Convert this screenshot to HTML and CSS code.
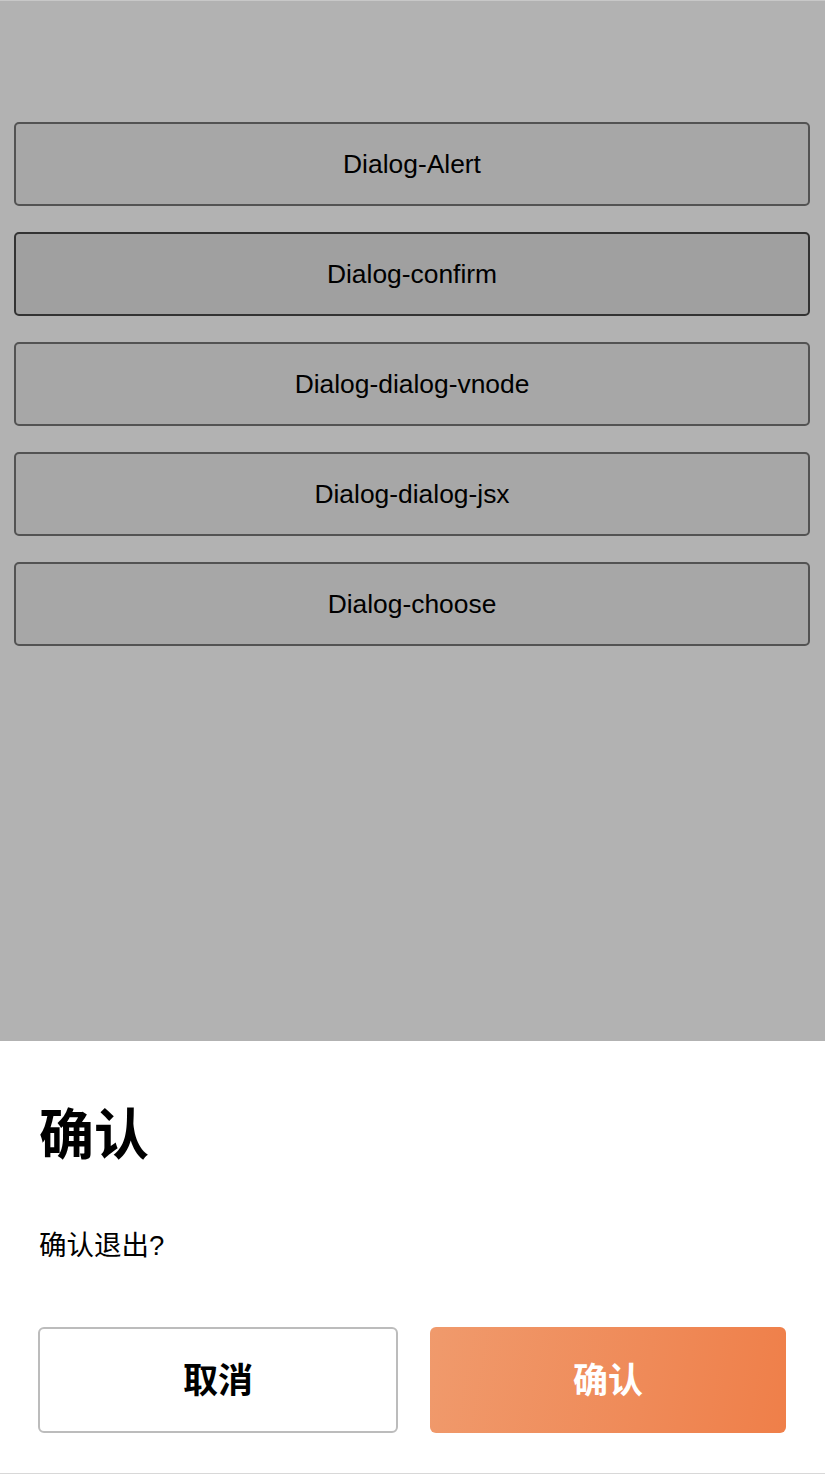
FILE: index.html
```html
<!DOCTYPE html>
<html lang="zh">
<head>
<meta charset="utf-8">
<title>Dialog</title>
<link rel="stylesheet" href="styles.css">
</head>
<body>
<div class="page">
  <div class="list">
    <button class="demo-btn">Dialog-Alert</button>
    <button class="demo-btn is-active">Dialog-confirm</button>
    <button class="demo-btn">Dialog-dialog-vnode</button>
    <button class="demo-btn">Dialog-dialog-jsx</button>
    <button class="demo-btn">Dialog-choose</button>
  </div>
</div>
<div class="mask"></div>
<div class="sheet">
  <h2 class="sheet-title">确认</h2>
  <p class="sheet-msg">确认退出?</p>
  <div class="sheet-actions">
    <button class="act act-cancel">取消</button>
    <button class="act act-ok">确认</button>
  </div>
</div>
</body>
</html>
```

FILE: styles.css
```css
html, body {
  margin: 0;
  padding: 0;
}
body {
  width: 825px;
  height: 1474px;
  overflow: hidden;
  position: relative;
  background: #fff;
  border-top: 1px solid #c8c8c8;
  box-sizing: border-box;
  font-family: "Liberation Sans", "Noto Sans CJK SC", sans-serif;
}
.page {
  height: 100%;
}
.list {
  display: flex;
  flex-direction: column;
  gap: 26px;
  padding: 121px 15px 0 14px;
}
.demo-btn {
  height: 84px;
  margin: 0;
  background: #efefef;
  border: 2px solid #777;
  border-radius: 5px;
  font-family: "Liberation Sans", sans-serif;
  font-size: 26.4px;
  color: #000;
  padding: 0;
}
.demo-btn.is-active {
  background: #e5e5e5;
  border-color: #4a4a4a;
}
.mask {
  position: absolute;
  left: 0;
  right: 0;
  top: 0;
  bottom: 0;
  background: rgba(0, 0, 0, 0.3);
}
.sheet {
  position: absolute;
  left: 0;
  right: 0;
  bottom: 0;
  height: 433px;
  box-sizing: border-box;
  background: #fff;
  border-bottom: 1px solid #d8d8d8;
  padding: 58px 39px 0 38px;
  display: flex;
  flex-direction: column;
}
.sheet-title {
  margin: 0 0 0 1px;
  font-size: 55px;
  line-height: 62px;
  font-weight: 700;
  color: #000;
  font-family: "Noto Sans CJK SC", sans-serif;
}
.sheet-msg {
  margin: 67px 0 0 1px;
  font-size: 27.5px;
  line-height: 36px;
  color: #000;
  font-family: "Liberation Sans", "Noto Sans CJK SC", sans-serif;
}
.sheet-actions {
  margin-top: 63px;
  display: flex;
  gap: 32px;
}
.act {
  height: 106px;
  margin: 0;
  padding: 0 0 5px;
  border-radius: 6px;
  font-family: "Noto Sans CJK SC", sans-serif;
  font-size: 35px;
  font-weight: 700;
}
.act-cancel {
  width: 360px;
  background: #fff;
  border: 2px solid #bcbcbc;
  color: #000;
}
.act-ok {
  width: 356px;
  border: none;
  color: #fff;
  background: linear-gradient(100deg, #f09a6c 0%, #ef8a58 60%, #ef7f49 100%);
}
```
